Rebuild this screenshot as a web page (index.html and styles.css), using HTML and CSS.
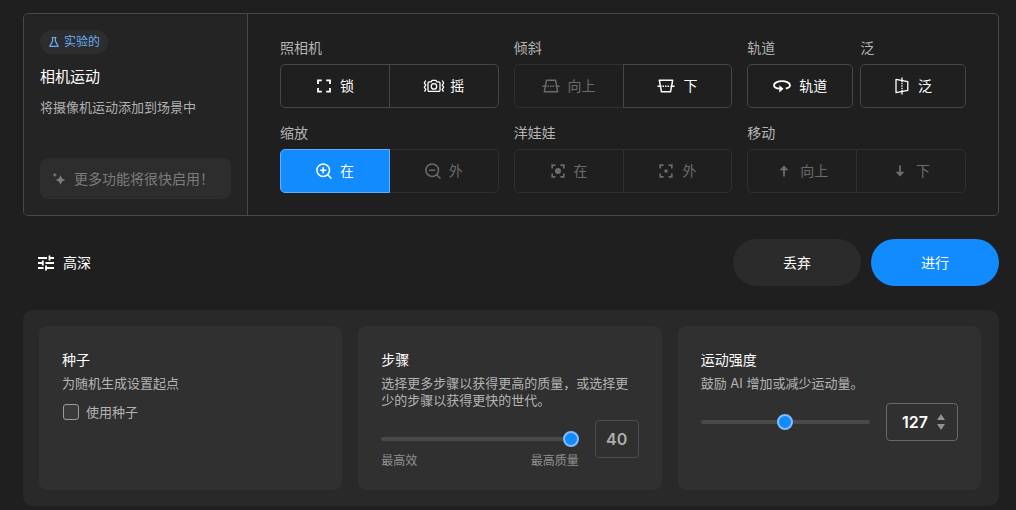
FILE: index.html
```html
<!DOCTYPE html>
<html lang="zh-CN">
<head>
<meta charset="utf-8">
<meta name="viewport" content="width=device-width, initial-scale=1">
<title>相机运动</title>
<link rel="stylesheet" href="styles.css">
</head>
<body>
<main class="page">
  <section class="motion">
    <div class="intro">
      <span class="tag">
        <svg width="12" height="12" viewBox="0 0 12 12" fill="none" stroke="currentColor" stroke-width="1.2" stroke-linejoin="round" stroke-linecap="round"><path d="M4 1.5h4M4.600 1.500v3.600L1.800 10.300h8.400L7.400 5.100V1.500"/></svg>
        实验的
      </span>
      <h2 class="intro-title">相机运动</h2>
      <p class="intro-text">将摄像机运动添加到场景中</p>
      <div class="soon">
        <svg width="14" height="14" viewBox="0 0 14 14" fill="currentColor"><path d="M8.500 3.200l1.600 3.200 3.200 1.600-3.200 1.600-1.600 3.200-1.600-3.200L3.700 8l3.200-1.600zM2.800.8l.7 1.500 1.500.7-1.500.7-.7 1.500-.7-1.500L.6 3l1.500-.7z"/></svg>
        <span>更多功能将很快启用！</span>
      </div>
    </div>

    <div class="controls">
      <div class="group" role="group" aria-labelledby="g-camera">
        <span class="group-label" id="g-camera">照相机</span>
        <div class="segment">
          <button type="button" class="option">
            <svg width="16" height="16" viewBox="0 0 16 16" fill="none" stroke="currentColor" stroke-width="1.8"><path d="M2 6V2.4h3.8M10.2 2.4H14V6M14 10v3.600h-3.800M5.800 13.600H2V10"/></svg>锁
          </button>
          <button type="button" class="option option-tight">
            <svg width="22" height="14" viewBox="0 0 22 14" fill="none" stroke="currentColor" stroke-width="1.3" stroke-linejoin="round"><path d="M6.200 2.800h1.900l1-1.500h3.800l1 1.500h1.900q1.200 0 1.200 1.200v7.200q0 1.200-1.200 1.200H6.200Q5 12.400 5 11.200V4q0-1.200 1.200-1.200z"/><circle cx="11" cy="7.400" r="2.700"/><path d="M2.800 1.500L1.300 4l1.500 2.200L1.300 8.200l1.500 2.200-1.300 2.200M19.200 1.500L20.700 4l-1.500 2.200 1.500 2-1.500 2.200 1.300 2.200"/></svg>摇
          </button>
        </div>
      </div>

      <div class="group" role="group" aria-labelledby="g-tilt">
        <span class="group-label" id="g-tilt">倾斜</span>
        <div class="segment">
          <button type="button" class="option" disabled>
            <svg width="18" height="16" viewBox="0 0 18 16" fill="none" stroke="currentColor" stroke-width="1.400" stroke-linejoin="round"><path d="M4.500 2.200h9l2.200 11.600H2.300z"/><path d="M.500 8.300h4M13.500 8.300h4"/><path d="M5.500 8.300h7" stroke-dasharray="1.500 1"/></svg>向上
          </button>
          <button type="button" class="option">
            <svg width="18" height="16" viewBox="0 0 18 16" fill="none" stroke="currentColor" stroke-width="1.500" stroke-linejoin="round"><path d="M2.300 2.200h13.400l-2.200 11.600h-9z"/><path d="M.500 8.200h4M13.500 8.200h4"/><path d="M5.500 8.200h7" stroke-dasharray="1.500 1"/></svg>下
          </button>
        </div>
      </div>

      <div class="pair">
        <div class="group" role="group" aria-labelledby="g-orbit">
          <span class="group-label" id="g-orbit">轨道</span>
          <div class="segment">
            <button type="button" class="option">
              <svg width="18" height="14" viewBox="0 0 18 14" fill="none" stroke="currentColor" stroke-width="1.800"><path d="M8.500 9.700H6.800C3.500 9.400 1 8.200 1 6.200 1 4 4.600 2.200 9 2.200s8 1.800 8 4c0 1.500-1.500 2.700-4.200 3.300"/><path d="M6.300 6.300l4.200 3.400-4.200 3.800z" fill="currentColor" stroke="none"/></svg>轨道
            </button>
          </div>
        </div>
        <div class="group" role="group" aria-labelledby="g-pan">
          <span class="group-label" id="g-pan">泛</span>
          <div class="segment">
            <button type="button" class="option">
              <svg width="16" height="18" viewBox="0 0 16 18" fill="none" stroke="currentColor" stroke-width="1.300" stroke-linejoin="round"><path d="M2 2.300l11.800 2.300v8.800L2 15.700z"/><path d="M8 .500v4.500M8 13v4.500"/><path d="M8 5.800v6.500" stroke-dasharray="1.500 1"/></svg>泛
            </button>
          </div>
        </div>
      </div>

      <div class="group" role="group" aria-labelledby="g-zoom">
        <span class="group-label" id="g-zoom">缩放</span>
        <div class="segment">
          <button type="button" class="option option-on" aria-pressed="true">
            <svg width="16" height="16" viewBox="0 0 16 16" fill="none" stroke="currentColor" stroke-width="1.500"><circle cx="7.200" cy="7.200" r="6.300"/><path d="M11.700 11.700l3.800 3.800M7.200 4.200v6M4.200 7.200h6"/></svg>在
          </button>
          <button type="button" class="option" disabled>
            <svg width="16" height="16" viewBox="0 0 16 16" fill="none" stroke="currentColor" stroke-width="1.500"><circle cx="7.200" cy="7.200" r="6.300"/><path d="M11.700 11.700l3.800 3.800M4.200 7.200h6"/></svg>外
          </button>
        </div>
      </div>

      <div class="group" role="group" aria-labelledby="g-dolly">
        <span class="group-label" id="g-dolly">洋娃娃</span>
        <div class="segment">
          <button type="button" class="option" disabled>
            <svg width="16" height="16" viewBox="0 0 16 16" fill="none" stroke="currentColor" stroke-width="1.700"><path d="M2.200 5.500V2.200h3.300M10.500 2.200h3.300v3.300M13.800 10.500v3.300h-3.300M5.500 13.800H2.200v-3.300"/><circle cx="8" cy="8" r="3" fill="currentColor" stroke="none"/></svg>在
          </button>
          <button type="button" class="option" disabled>
            <svg width="16" height="16" viewBox="0 0 16 16" fill="none" stroke="currentColor" stroke-width="1.700"><path d="M2.200 5.500V2.200h3.300M10.500 2.200h3.300v3.300M13.800 10.500v3.300h-3.300M5.500 13.800H2.200v-3.300"/><circle cx="8" cy="8" r="1.800" fill="currentColor" stroke="none"/></svg>外
          </button>
        </div>
      </div>

      <div class="group" role="group" aria-labelledby="g-move">
        <span class="group-label" id="g-move">移动</span>
        <div class="segment">
          <button type="button" class="option" disabled>
            <svg width="16" height="16" viewBox="0 0 16 16" fill="none" stroke="currentColor" stroke-width="1.800"><path d="M8 13.500V4"/><path d="M3.500 7.200L8 2.500l4.500 4.700z" fill="currentColor" stroke="none"/></svg>向上
          </button>
          <button type="button" class="option" disabled>
            <svg width="16" height="16" viewBox="0 0 16 16" fill="none" stroke="currentColor" stroke-width="1.800"><path d="M8 2.500V12"/><path d="M3.500 8.800L8 13.500l4.500-4.700z" fill="currentColor" stroke="none"/></svg>下
          </button>
        </div>
      </div>
    </div>
  </section>

  <div class="actions">
    <button type="button" class="advanced" aria-expanded="true">
      <svg width="16" height="16" viewBox="0 0 16 16" fill="none" stroke="currentColor" stroke-width="1.800"><path d="M0 3h9M11 3h5M11.500.500v5M0 8h5M7.500 8H16M4.800 5.500v5M0 13h5.500M8 13h8M8 10.500v5"/></svg>
      高深
    </button>
    <button type="button" class="pill">丢弃</button>
    <button type="button" class="pill pill-primary">进行</button>
  </div>

  <section class="settings">
    <div class="card">
      <h3 class="card-title">种子</h3>
      <p class="card-text">为随机生成设置起点</p>
      <label class="check"><input type="checkbox" class="check-box">使用种子</label>
    </div>

    <div class="card">
      <h3 class="card-title" id="steps">步骤</h3>
      <p class="card-text">选择更多步骤以获得更高的质量，或选择更少的步骤以获得更快的世代。</p>
      <div class="slider-row">
        <div class="slider">
          <input type="range" class="range" min="1" max="40" value="40" aria-labelledby="steps">
          <div class="scale"><span>最高效</span><span>最高质量</span></div>
        </div>
        <output class="value">40</output>
      </div>
    </div>

    <div class="card">
      <h3 class="card-title" id="strength">运动强度</h3>
      <p class="card-text">鼓励 AI 增加或减少运动量。</p>
      <div class="slider-row">
        <div class="slider">
          <input type="range" class="range" min="0" max="255" value="127" aria-labelledby="strength">
        </div>
        <div class="stepper">
          <input type="text" class="stepper-input" inputmode="numeric" value="127" aria-labelledby="strength">
          <div class="stepper-arrows">
            <button type="button" class="arrow" aria-label="增加"><svg width="8" height="6" viewBox="0 0 8 6" fill="currentColor"><path d="M4 0l4 6H0z"/></svg></button>
            <button type="button" class="arrow" aria-label="减少"><svg width="8" height="6" viewBox="0 0 8 6" fill="currentColor"><path d="M4 6L0 0h8z"/></svg></button>
          </div>
        </div>
      </div>
    </div>
  </section>
</main>
</body>
</html>
```
FILE: styles.css
```css
* {
  box-sizing: border-box;
}

body {
  margin: 0;
  background: #1f1f1f;
  color: #fff;
  font-family: Inter, "Noto Sans CJK SC", sans-serif;
  font-size: 14px;
  line-height: 20px;
}

h2, h3, p {
  margin: 0;
}

button, input {
  font: inherit;
  color: inherit;
}

button {
  padding: 0;
}

svg {
  display: block;
  flex: none;
}

.page {
  padding: 13px 17px 4px 23px;
}

/* Camera motion panel */
.motion {
  display: grid;
  grid-template-columns: 224px 1fr;
  border: 1px solid #484848;
  border-radius: 5px;
  overflow: hidden;
}

.intro {
  display: flex;
  flex-direction: column;
  align-items: flex-start;
  padding: 16px;
  border-right: 1px solid #484848;
  background: #242424;
}

.tag {
  display: flex;
  align-items: center;
  gap: 4px;
  height: 24px;
  padding: 0 8px;
  border-radius: 12px;
  background: #2c2d2e;
  color: #68aef5;
  font-size: 12px;
}

.intro-title {
  margin-top: 11px;
  font-size: 15px;
  font-weight: 400;
  line-height: 24px;
}

.intro-text {
  margin-top: 8px;
  color: #b0b0b0;
  font-size: 13px;
}

.soon {
  display: flex;
  align-items: center;
  align-self: stretch;
  gap: 8px;
  height: 41px;
  margin-top: auto;
  padding: 0 12px;
  border-radius: 8px;
  background: #2d2d2d;
  color: #7c7c7c;
}

.controls {
  display: grid;
  grid-template-columns: repeat(3, 1fr);
  gap: 15px;
  padding: 24px 32px 22px;
}

.pair {
  display: grid;
  grid-template-columns: 1fr 1fr;
  gap: 7px;
}

.group {
  display: flex;
  flex-direction: column;
  gap: 6px;
}

.group-label {
  color: #b4b4b4;
}

.segment {
  display: flex;
}

.option {
  position: relative;
  z-index: 1;
  display: flex;
  flex: 1;
  align-items: center;
  justify-content: center;
  gap: 8px;
  height: 44px;
  border: 1px solid #464646;
  background: none;
}

.option-tight {
  gap: 5px;
}

.option + .option {
  margin-left: -1px;
}

.option:first-child {
  border-top-left-radius: 5px;
  border-bottom-left-radius: 5px;
}

.option:last-child {
  border-top-right-radius: 5px;
  border-bottom-right-radius: 5px;
}

.option:disabled {
  z-index: 0;
  border-color: #2f2f2f;
  color: #6c6c6c;
}

.option-on {
  border-color: #5aafff;
  background: #128bff;
}

/* Actions */
.actions {
  display: flex;
  align-items: center;
  gap: 10px;
  margin: 23px 0 24px;
}

.advanced {
  display: flex;
  align-items: center;
  gap: 9px;
  margin-right: auto;
  padding-left: 15px;
  border: 0;
  background: none;
}

.pill {
  width: 128px;
  height: 47px;
  border: 0;
  border-radius: 24px;
  background: #2b2b2b;
}

.pill-primary {
  background: #128bff;
}

/* Settings */
.settings {
  display: grid;
  grid-template-columns: repeat(3, 1fr);
  gap: 16px;
  padding: 16px 18px 16px 16px;
  border-radius: 10px;
  background: #292929;
}

.card {
  padding: 23px 23px 21px;
  border-radius: 8px;
  background: #303030;
}

.card-title {
  font-size: 14px;
  font-weight: 400;
  line-height: 22px;
}

.card-text {
  margin-top: 4px;
  color: #b4b4b4;
  font-size: 13px;
  line-height: 17px;
}

.check {
  display: flex;
  align-items: center;
  gap: 7px;
  margin-top: 10px;
  color: #b4b4b4;
  font-size: 13px;
}

.check-box {
  width: 16px;
  height: 16px;
  margin: 0 0 0 1px;
  border: 1px solid #9a9a9a;
  border-radius: 3px;
  background: #3a3a3a;
  appearance: none;
}

.check-box:checked {
  background: #128bff;
}

.slider-row {
  display: flex;
  align-items: flex-start;
  gap: 16px;
  margin-top: 11px;
}

.slider {
  flex: 1;
  min-width: 0;
  padding-top: 9px;
}

.range {
  display: block;
  width: 100%;
  height: 20px;
  margin: 0;
  background: none;
  appearance: none;
}

.range::-webkit-slider-runnable-track {
  height: 4px;
  border-radius: 2px;
  background: #4a4a4a;
}

.range::-webkit-slider-thumb {
  width: 16px;
  height: 16px;
  margin-top: -6px;
  border: 2px solid #7fbdfb;
  border-radius: 50%;
  background: #128bff;
  appearance: none;
}

.scale {
  display: flex;
  justify-content: space-between;
  margin-top: 4px;
  color: #919191;
  font-size: 12px;
  line-height: 16px;
}

.value {
  width: 44px;
  height: 38px;
  border: 1px solid #4c4c4c;
  border-radius: 4px;
  color: #acacac;
  font-size: 16px;
  font-weight: 600;
  line-height: 36px;
  text-align: center;
}

.stepper {
  display: flex;
  align-items: center;
  width: 72px;
  height: 38px;
  padding: 0 12px 0 15px;
  border: 1px solid #686868;
  border-radius: 4px;
}

.stepper-input {
  flex: 1;
  min-width: 0;
  padding: 0;
  border: 0;
  outline: 0;
  background: none;
  font-size: 16px;
  font-weight: 600;
}

.stepper-arrows {
  display: flex;
  flex-direction: column;
  gap: 4px;
}

.arrow {
  border: 0;
  background: none;
  color: #929292;
}
```
